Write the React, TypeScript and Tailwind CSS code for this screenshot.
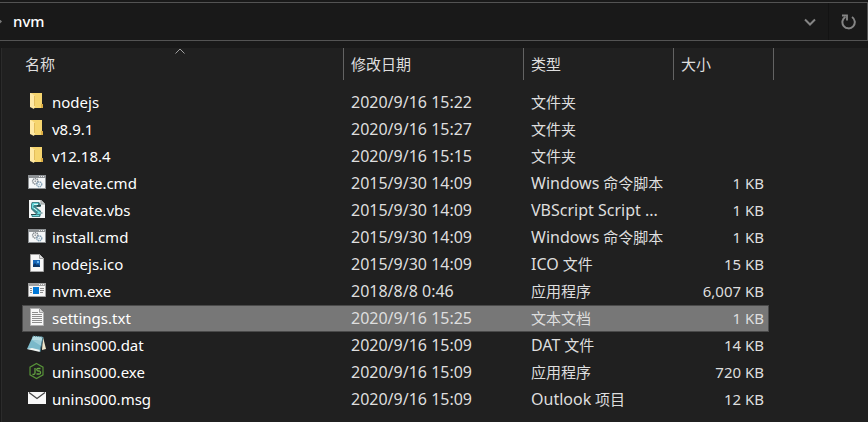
import type { ReactNode } from 'react'
import clsx from 'clsx'

type IconKind = 'folder' | 'script' | 'vbs' | 'ico' | 'exe' | 'text' | 'dat' | 'node' | 'mail'

interface FileEntry {
  name: string
  icon: IconKind
  modified: string
  app?: string
  type?: string
  size?: string
}

const files: FileEntry[] = [
  { name: 'nodejs', icon: 'folder', modified: '2020/9/16 15:22', type: '文件夹' },
  { name: 'v8.9.1', icon: 'folder', modified: '2020/9/16 15:27', type: '文件夹' },
  { name: 'v12.18.4', icon: 'folder', modified: '2020/9/16 15:15', type: '文件夹' },
  { name: 'elevate.cmd', icon: 'script', modified: '2015/9/30 14:09', app: 'Windows', type: '命令脚本', size: '1 KB' },
  { name: 'elevate.vbs', icon: 'vbs', modified: '2015/9/30 14:09', app: 'VBScript Script ...', size: '1 KB' },
  { name: 'install.cmd', icon: 'script', modified: '2015/9/30 14:09', app: 'Windows', type: '命令脚本', size: '1 KB' },
  { name: 'nodejs.ico', icon: 'ico', modified: '2015/9/30 14:09', app: 'ICO', type: '文件', size: '15 KB' },
  { name: 'nvm.exe', icon: 'exe', modified: '2018/8/8 0:46', type: '应用程序', size: '6,007 KB' },
  { name: 'settings.txt', icon: 'text', modified: '2020/9/16 15:25', type: '文本文档', size: '1 KB' },
  { name: 'unins000.dat', icon: 'dat', modified: '2020/9/16 15:09', app: 'DAT', type: '文件', size: '14 KB' },
  { name: 'unins000.exe', icon: 'node', modified: '2020/9/16 15:09', type: '应用程序', size: '720 KB' },
  { name: 'unins000.msg', icon: 'mail', modified: '2020/9/16 15:09', app: 'Outlook', type: '项目', size: '12 KB' },
]

const selected = 'settings.txt'

const iconShapes: Record<IconKind, ReactNode> = {
  folder: (
    <>
      <path d="M3 1h11v12h1v3H5z" fill="#f6d56f" />
      <path d="M13 12h2v4h-2z" fill="#dcae45" />
      <path d="M2 1h1l4 3v10l-1 3-4-2z" fill="#ffe9a6" />
      <path d="M6.5 4v10" stroke="#e3bd5c" strokeWidth="1" />
    </>
  ),
  script: (
    <>
      <path d="M0 2h18v14H0z" fill="#8d9194" />
      <path d="M1 5h16v10H1z" fill="#f5f7f8" />
      <path d="M11 3.5h1m1 0h1m1 0h1" stroke="#e8e8e8" />
      <circle cx="7.3" cy="8.3" r="2.6" fill="#fff" stroke="#858b90" strokeWidth="1.6" strokeDasharray="1.3 .6" />
      <circle cx="7.3" cy="8.3" r="1" fill="#9ba1a5" />
      <circle cx="11.3" cy="11.3" r="2.4" fill="#fff" stroke="#87a4b8" strokeWidth="1.5" strokeDasharray="1.3 .5" />
      <circle cx="11.3" cy="11.3" r=".9" fill="#acc3d2" />
    </>
  ),
  vbs: (
    <>
      <path d="M1 0h12l4 4v14H1z" fill="#f3f5f5" />
      <path d="M13 0v4h4" fill="#c5caca" stroke="#949a9a" />
      <path d="M4 2h7l2 3-1 2H8l5 4v3l-1 3H4l-1-3h5l-5-5V4z" fill="#3f8288" />
      <path d="M5 3h5v2H6l-1 2 7 5v2H9l1-2-6-4V4z" fill="#66d8dc" />
      <path d="M4 15h7v1H5z" fill="#74dfe2" />
      <path d="M6 4.500h4M6 8l3 2.500" stroke="#d4f7f5" />
      <path d="M9 5h4v1.500H9zM3 14h5v1H3z" fill="#2a4448" />
      <path d="M12 12h2.500v2H12z" fill="#8fb2b4" />
    </>
  ),
  ico: (
    <>
      <path d="M2.500.5h9l4 4v13h-13z" fill="#f7f7f7" stroke="#a4a4a4" />
      <path d="M11.500.5v4h4" fill="#ddd" stroke="#a4a4a4" />
      <path d="M5 6h7v7H5z" fill="#1767b9" />
      <path d="M5 11l2-2 2 2 1-1 2 2v1H5z" fill="#0b3768" />
      <path d="M9 7h2v2H9z" fill="#69b7ef" />
    </>
  ),
  exe: (
    <>
      <path d="M.5 2.500h17v13H.5z" fill="#f6f6f6" stroke="#a0a0a0" />
      <path d="M0 2h18v3H0z" fill="#a0a0a0" />
      <path d="M11 3.500h1m1 0h1m1 0h1" stroke="#f4f4f4" />
      <path d="M5 6h6v7H5z" fill="#0078d7" />
      <path d="M2 7.500h2m-2 2h2m-2 2h2m8-4h4m-4 2h4m-4 2h3" stroke="#8d8d8d" />
    </>
  ),
  text: (
    <>
      <path d="M2.500.5h9l4 4v13h-13z" fill="#f8f8f8" stroke="#b0b0b0" />
      <path d="M11.500.5v4h4" fill="#ddd" stroke="#a0a0a0" />
      <path d="M4 4.500h6m-6 2h10m-10 2h10m-10 2h10m-10 2h10m-10 2h10" stroke="#8e8e8e" />
    </>
  ),
  dat: (
    <>
      <path d="M15 2l3 12-4 1z" fill="#ede5ca" />
      <path d="M5 1l10 1-3 14-13-2z" fill="#7bb9ca" />
      <path d="M5 1l10 1-1 4-10-1z" fill="#b5dce3" />
      <path d="M4 5l10 1-1 5z" fill="#9dcdd8" />
      <path d="M-1 14l5-1 8 2v2z" fill="#f1f5f2" />
      <path d="M5 1l10 1" stroke="#4b7884" strokeDasharray="1 1" />
      <path d="M15 2l-3 15" stroke="#427584" />
    </>
  ),
  node: (
    <>
      <path d="M8.500 1.500l6.500 3.700v7.600l-6.500 3.700L2 12.800V5.200z" fill="none" stroke="#579238" strokeWidth="1.200" />
      <path
        d="M7 6v5q0 1.500-1.500 1.500L4.500 12M12.500 6.500H10q-1.500 0-1.200 1.300t2 1.200 1.700 1.600-1.800 1.400H8.500"
        fill="none"
        stroke="#64a442"
        strokeWidth="1.300"
      />
    </>
  ),
  mail: (
    <>
      <path d="M0 3h18v12H0z" fill="#f7f7f7" />
      <path d="M1 3.500l8 6 8-6" fill="none" stroke="#444" strokeWidth="1.200" />
    </>
  ),
}

function FileIcon({ kind }: { kind: IconKind }) {
  return (
    <svg viewBox="0 0 18 21" className="h-[21px] w-[18px] shrink-0 overflow-visible" aria-hidden="true">
      {iconShapes[kind]}
    </svg>
  )
}

function AddressBar() {
  return (
    <div className="mt-[2px] flex h-[39px] items-stretch border-y border-r border-[#535353]">
      <svg viewBox="0 0 5 37" className="w-[5px]" aria-hidden="true">
        <path d="M-1 15.500l3 3-3 3z" fill="#777" />
      </svg>
      <button type="button" className="px-2 pb-px text-[15px] font-medium text-white">
        nvm
      </button>
      <button
        type="button"
        aria-label="Previous locations"
        className="ml-auto flex w-[38px] items-center justify-center border-r border-[#131313]"
      >
        <svg viewBox="0 0 12 8" className="h-2 w-3" aria-hidden="true">
          <path d="M1 1.500l5 5 5-5" fill="none" stroke="#858585" strokeWidth="2" />
        </svg>
      </button>
      <button type="button" aria-label="Refresh" className="flex w-[38px] items-center justify-center">
        <svg viewBox="0 0 16 16" className="size-4" aria-hidden="true">
          <path d="M12 3A6.200 6.200 0 1 1 5.500 2.800" fill="none" stroke="#858585" strokeWidth="2" />
          <path d="M2 1.500h5v5" fill="none" stroke="#858585" strokeWidth="1.800" />
        </svg>
      </button>
    </div>
  )
}

function ColumnHeader({ label, sorted, last }: { label: string; sorted?: boolean; last?: boolean }) {
  return (
    <th scope="col" aria-sort={sorted ? 'ascending' : undefined} className="h-[41px] p-0 align-top font-normal">
      <button
        type="button"
        className={clsx(
          'relative flex h-8 items-center border-r border-[#636363] text-[15px] text-[#dedede]',
          sorted ? 'pl-[3px]' : 'pl-[7px]',
          last ? 'w-[calc(100%+5px)]' : 'w-full',
        )}
      >
        {label}
        {sorted ? (
          <svg viewBox="0 0 10 6" className="absolute top-0 left-1/2 -ml-2 h-[6px] w-[10px]" aria-hidden="true">
            <path d="M.5 5.500L5 1l4.500 4.500" fill="none" stroke="#a0a0a0" />
          </svg>
        ) : null}
      </button>
    </th>
  )
}

function FileRow({ file }: { file: FileEntry }) {
  const active = file.name === selected

  return (
    <tr
      aria-selected={active}
      className={clsx('h-[27px]', active && 'bg-[#777777] outline outline-1 -outline-offset-1 outline-[#4a4a4a]')}
    >
      <td className="p-0 pl-[6px]">
        <div className="flex items-center gap-[6px] text-white">
          <FileIcon kind={file.icon} />
          <span className="pb-[2px]">{file.name}</span>
        </div>
      </td>
      <td className="p-0 pb-[2px] pl-[7px] text-[16px]">{file.modified}</td>
      <td className="p-0 pb-[2px] pl-[7px]">
        {file.app ? <span className="text-[16px]">{file.app}</span> : null}
        {file.app && file.type ? ' ' : null}
        {file.type}
      </td>
      <td className="p-0 pr-[5px] pb-[2px] text-right">{file.size}</td>
    </tr>
  )
}

export default function App() {
  return (
    <div className="flex min-h-screen flex-col overflow-hidden bg-[#191919] font-['Noto_Sans','Noto_Sans_CJK_SC',sans-serif]">
      <AddressBar />
      <main className="mt-[7px] ml-px flex-1 border-l border-[#2b2b2b] bg-[#202020] pl-5">
        <table className="w-[747px] table-fixed border-collapse text-left text-[15px] leading-5 whitespace-nowrap text-[#dedede]">
          <colgroup>
            <col className="w-[322px]" />
            <col className="w-[180px]" />
            <col className="w-[150px]" />
            <col className="w-[95px]" />
          </colgroup>
          <thead>
            <tr>
              <ColumnHeader label="名称" sorted />
              <ColumnHeader label="修改日期" />
              <ColumnHeader label="类型" />
              <ColumnHeader label="大小" last />
            </tr>
          </thead>
          <tbody>
            {files.map((file) => (
              <FileRow key={file.name} file={file} />
            ))}
          </tbody>
        </table>
      </main>
    </div>
  )
}
